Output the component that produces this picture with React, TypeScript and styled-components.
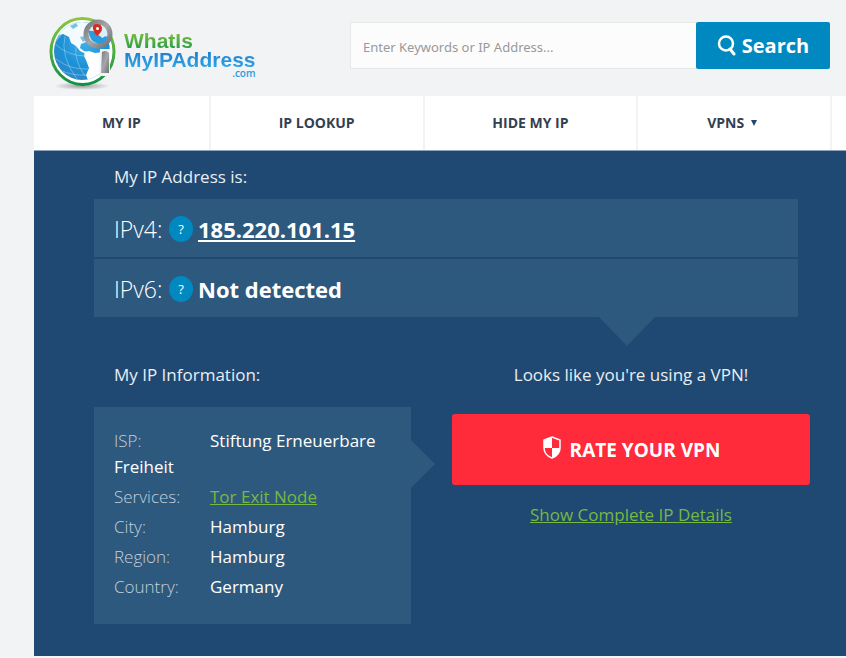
import React from "react";
import styled, { createGlobalStyle } from "styled-components";

const GlobalStyle = createGlobalStyle`
  *, *::before, *::after { box-sizing: border-box; }
  body {
    margin: 0;
    background: #f1f3f5;
    font-family: "Open Sans", "Noto Sans", sans-serif;
    color: #ffffff;
  }
`;

const Page = styled.div`
  padding-left: 34px;
`;

const Header = styled.header`
  display: flex;
  align-items: flex-start;
  justify-content: space-between;
  gap: 24px;
  min-height: 96px;
  padding: 14px 16px 0 14px;
`;

const Logo = styled.a`
  display: flex;
  flex: none;
  gap: 4px;
  text-decoration: none;
`;

const Wordmark = styled.span`
  display: flex;
  flex-direction: column;
  padding-top: 15px;
  font-family: "Liberation Sans", Arial, sans-serif;
  font-weight: 700;
`;

const WordLine = styled.span<{ $from: string; $to: string }>`
  margin-bottom: -5px;
  font-size: 21px;
  line-height: 24px;
  color: transparent;
  background: linear-gradient(${(p) => p.$from}, ${(p) => p.$to});
  background-clip: text;
`;

const WordSuffix = styled.span`
  align-self: flex-end;
  padding-top: 2px;
  font-family: "Open Sans", sans-serif;
  font-size: 10px;
  font-weight: 600;
  line-height: 8px;
  color: #2b9cdb;
`;

const SearchForm = styled.form`
  display: flex;
  flex: 0 1 480px;
  height: 47px;
  margin-top: 8px;
`;

const SearchInput = styled.input`
  flex: 1;
  min-width: 0;
  padding: 2px 12px 0;
  border: 1px solid #e6e8e8;
  border-right: 0;
  border-radius: 0;
  background: #fcfcfc;
  font: 400 13px "Noto Sans", sans-serif;
  color: #444444;
  &::placeholder { color: #999999; opacity: 1; }
`;

const SearchButton = styled.button`
  display: flex;
  flex: none;
  align-items: center;
  justify-content: center;
  gap: 6px;
  width: 134px;
  padding: 0;
  border: 0;
  border-radius: 2px;
  background: #0089c0;
  color: #ffffff;
  font: 700 20px "Open Sans", sans-serif;
`;

const Nav = styled.nav`
  display: grid;
  grid-template-columns: 175fr 212fr 212fr 192fr 14fr;
  gap: 2px;
  height: 54px;
`;

const NavItem = styled.a`
  display: flex;
  align-items: center;
  justify-content: center;
  gap: 7px;
  padding-bottom: 2px;
  background: #ffffff;
  color: #333f52;
  font-size: 14px;
  font-weight: 700;
  text-decoration: none;
`;

const Panel = styled.main`
  min-height: 506px;
  padding: 13px 36px 32px 60px;
  border-top: 1px solid #8fa4b8;
  background: #1f4972;
`;

const Heading = styled.h2<{ $center?: boolean }>`
  margin: 0;
  padding: ${(p) => (p.$center ? "0" : "0 20px")};
  text-align: ${(p) => (p.$center ? "center" : "left")};
  font-size: 17px;
  font-weight: 400;
  line-height: 26px;
  color: #e9eef3;
`;

const AddressList = styled.div`
  position: relative;
  display: flex;
  flex-direction: column;
  gap: 2px;
  margin: 9px 12px 0 0;
  &::after {
    content: "";
    position: absolute;
    top: 100%;
    left: 505px;
    width: 56px;
    height: 29px;
    background: #2d597f;
    clip-path: polygon(0 0, 100% 0, 50% 100%);
  }
`;

const AddressRow = styled.div`
  display: flex;
  align-items: center;
  height: 58px;
  padding: 2px 20px 0;
  background: #2d597f;
  font-size: 22px;
  line-height: 30px;
`;

const Version = styled.span`
  width: 55px;
  font-size: 23px;
  font-weight: 300;
`;

const Help = styled.button`
  width: 24px;
  height: 26px;
  margin-right: 5px;
  padding: 0;
  border: 0;
  border-radius: 50%;
  background: #0089c0;
  color: #ffffff;
  font: 400 13px "Open Sans", sans-serif;
`;

const AddressLink = styled.a`
  color: #ffffff;
  font-weight: 700;
  text-decoration: underline;
  text-decoration-thickness: 2px;
  text-underline-offset: 2px;
`;

const Missing = styled.strong`
  font-weight: 700;
`;

const Columns = styled.div`
  display: grid;
  grid-template-columns: 317fr 358fr;
  gap: 41px;
  margin-top: 45px;
`;

const Info = styled.dl`
  position: relative;
  display: flex;
  flex-direction: column;
  gap: 4px;
  margin: 19px 0 0;
  padding: 21px 20px 24px;
  background: #2d597f;
  font-size: 17px;
  line-height: 26px;
  &::after {
    content: "";
    position: absolute;
    top: 33px;
    left: 100%;
    width: 24px;
    height: 48px;
    background: #2d597f;
    clip-path: polygon(0 0, 100% 50%, 0 100%);
  }
`;

const Term = styled.dt`
  display: inline-block;
  width: 96px;
  color: #c3d0dc;
  font-weight: 300;
`;

const Value = styled.dd`
  display: inline;
  margin: 0;
`;

const GreenLink = styled.a`
  color: #77b843;
  text-decoration: underline;
`;

const Actions = styled.div`
  display: flex;
  flex-direction: column;
  align-items: stretch;
`;

const RateButton = styled.button`
  display: flex;
  align-items: center;
  justify-content: center;
  gap: 8px;
  height: 71px;
  margin: 26px 0 17px;
  padding: 0;
  border: 0;
  border-radius: 3px;
  background: #ff2a3a;
  color: #ffffff;
  font: 700 19px "Open Sans", sans-serif;
`;

const Details = styled.p`
  margin: 0;
  text-align: center;
  font-size: 17px;
  line-height: 26px;
`;

const GlobeLogo = () => (
  <svg width="72" height="78" viewBox="0 0 72 78" aria-hidden="true">
    <defs>
      <linearGradient id="ring" x1="0" y1="0" x2="0" y2="1">
        <stop offset="0" stopColor="#8cc63f" />
        <stop offset="1" stopColor="#119044" />
      </linearGradient>
      <radialGradient id="sea" cx="0.55" cy="0.35" r="0.7">
        <stop offset="0" stopColor="#3fb0ea" />
        <stop offset="0.6" stopColor="#1b91d6" />
        <stop offset="1" stopColor="#2f86c6" />
      </radialGradient>
      <radialGradient id="shade">
        <stop offset="0" stopColor="#777" stopOpacity="0.7" />
        <stop offset="1" stopColor="#777" stopOpacity="0" />
      </radialGradient>
      <linearGradient id="metal" x1="0" y1="0" x2="1" y2="1">
        <stop offset="0" stopColor="#777a7d" />
        <stop offset="0.5" stopColor="#a5a7a9" />
        <stop offset="1" stopColor="#6f7275" />
      </linearGradient>
      <clipPath id="globe"><ellipse cx="34" cy="37" rx="28" ry="29" /></clipPath>
    </defs>
    <ellipse cx="34" cy="72" rx="28" ry="4" fill="url(#shade)" />
    <ellipse cx="34.500" cy="37.500" rx="31.500" ry="33" fill="#fff" stroke="url(#ring)" strokeWidth="3" />
    <ellipse cx="34" cy="37" rx="28" ry="29" fill="url(#sea)" />
    <g clipPath="url(#globe)">
      <path d="M6 30Q8 12 26 7L18 16 12 23Z" fill="#fff" fillOpacity="0.35" />
      <path d="M12 17l8-11 16-2 10 4-2 10-5 5-1 5-5 2-1 4 4 3 4 1-2 2-6-3-4-5-5-3-2-6-6-3-4 1z" fill="#fff" fillOpacity="0.95" />
      <path d="M37 38l4-1 6 2 8-1 4 4-2 14-8 9-9 1-2-5 3-7-3-8-2-4z" fill="#fff" />
      <path d="M22 12l6-3 2 3-5 3zM32 23l5-1 1 4-3 2z" fill="#77c2ec" />
      <g fill="none" stroke="#a6dbf7" strokeOpacity="0.5" strokeWidth="1">
        <path d="M7 30Q20 42 38 42M8 45Q22 56 40 55M17 22Q12 42 29 65M28 32Q26 47 37 62M12 56Q24 62 39 61" />
      </g>
    </g>
    <path d="M52 35h10v27H51z" fill="#f1f3f5" />
    <path d="M54 38q3-2 6 0l1 1v20h-8z" fill="url(#metal)" />
    <circle cx="50" cy="20" r="12" fill="#d9eff9" stroke="url(#metal)" strokeWidth="5" />
    <path d="M40.500 17q6-1 10 4l4 3q3-3 5-1-2 7-9 7-9-2-10-13" fill="#2a9bdc" />
    <path d="M45 15q-1-5 4-5t5 5q0 3-5 7-3-3-4-7" fill="#d92a20" />
    <circle cx="49.500" cy="14.500" r="1.500" fill="#fff" />
  </svg>
);

const SearchIcon = () => (
  <svg width="19" height="22" viewBox="0 0 19 22" fill="none" stroke="#fff" aria-hidden="true">
    <circle cx="9" cy="8.500" r="7" strokeWidth="2.500" />
    <path d="M13 14l4 5" strokeWidth="3" strokeLinecap="round" />
  </svg>
);

const ShieldIcon = () => (
  <svg width="20" height="28" viewBox="0 0 20 28" aria-hidden="true">
    <path d="M10 1l8 3v8q0 7-8 10Q2 19 2 12V4z" fill="none" stroke="#fff" strokeWidth="1.500" />
    <path d="M10 1v11H2V4zM10 12h8q0 7-8 10z" fill="#fff" />
  </svg>
);

const Caret = () => (
  <svg width="10" height="7" viewBox="0 0 10 7" aria-hidden="true">
    <path d="M0 1h6L3 7z" fill="#1f4972" />
  </svg>
);

const navItems = [
  { label: "MY IP" },
  { label: "IP LOOKUP" },
  { label: "HIDE MY IP" },
  { label: "VPNS", menu: true },
  { label: "" },
];

const details = [
  { term: "ISP:", value: "Stiftung Erneuerbare Freiheit" },
  { term: "Services:", value: "Tor Exit Node", link: true },
  { term: "City:", value: "Hamburg" },
  { term: "Region:", value: "Hamburg" },
  { term: "Country:", value: "Germany" },
];

export default function App() {
  return (
    <>
      <GlobalStyle />
      <Page>
        <Header>
          <Logo href="#">
            <GlobeLogo />
            <Wordmark>
              <WordLine $from="#8cc63f" $to="#159447">WhatIs</WordLine>
              <WordLine $from="#1b75c9" $to="#35b0ec">MyIPAddress</WordLine>
              <WordSuffix>.com</WordSuffix>
            </Wordmark>
          </Logo>
          <SearchForm role="search" onSubmit={(e) => e.preventDefault()}>
            <SearchInput
              type="text"
              aria-label="Enter Keywords or IP Address"
              placeholder="Enter Keywords or IP Address..."
            />
            <SearchButton type="submit"><SearchIcon />Search</SearchButton>
          </SearchForm>
        </Header>
        <Nav>
          {navItems.map((item, i) => (
            <NavItem key={i} href="#">
              {item.label}
              {item.menu && <Caret />}
            </NavItem>
          ))}
        </Nav>
        <Panel>
          <Heading>My IP Address is:</Heading>
          <AddressList>
            <AddressRow>
              <Version>IPv4:</Version>
              <Help type="button" aria-label="About IPv4">?</Help>
              <AddressLink href="#">185.220.101.15</AddressLink>
            </AddressRow>
            <AddressRow>
              <Version>IPv6:</Version>
              <Help type="button" aria-label="About IPv6">?</Help>
              <Missing>Not detected</Missing>
            </AddressRow>
          </AddressList>
          <Columns>
            <section>
              <Heading>My IP Information:</Heading>
              <Info>
                {details.map((d) => (
                  <div key={d.term}>
                    <Term>{d.term}</Term>
                    <Value>{d.link ? <GreenLink href="#">{d.value}</GreenLink> : d.value}</Value>
                  </div>
                ))}
              </Info>
            </section>
            <Actions>
              <Heading $center>Looks like you're using a VPN!</Heading>
              <RateButton type="button"><ShieldIcon />RATE YOUR VPN</RateButton>
              <Details><GreenLink href="#">Show Complete IP Details</GreenLink></Details>
            </Actions>
          </Columns>
        </Panel>
      </Page>
    </>
  );
}
